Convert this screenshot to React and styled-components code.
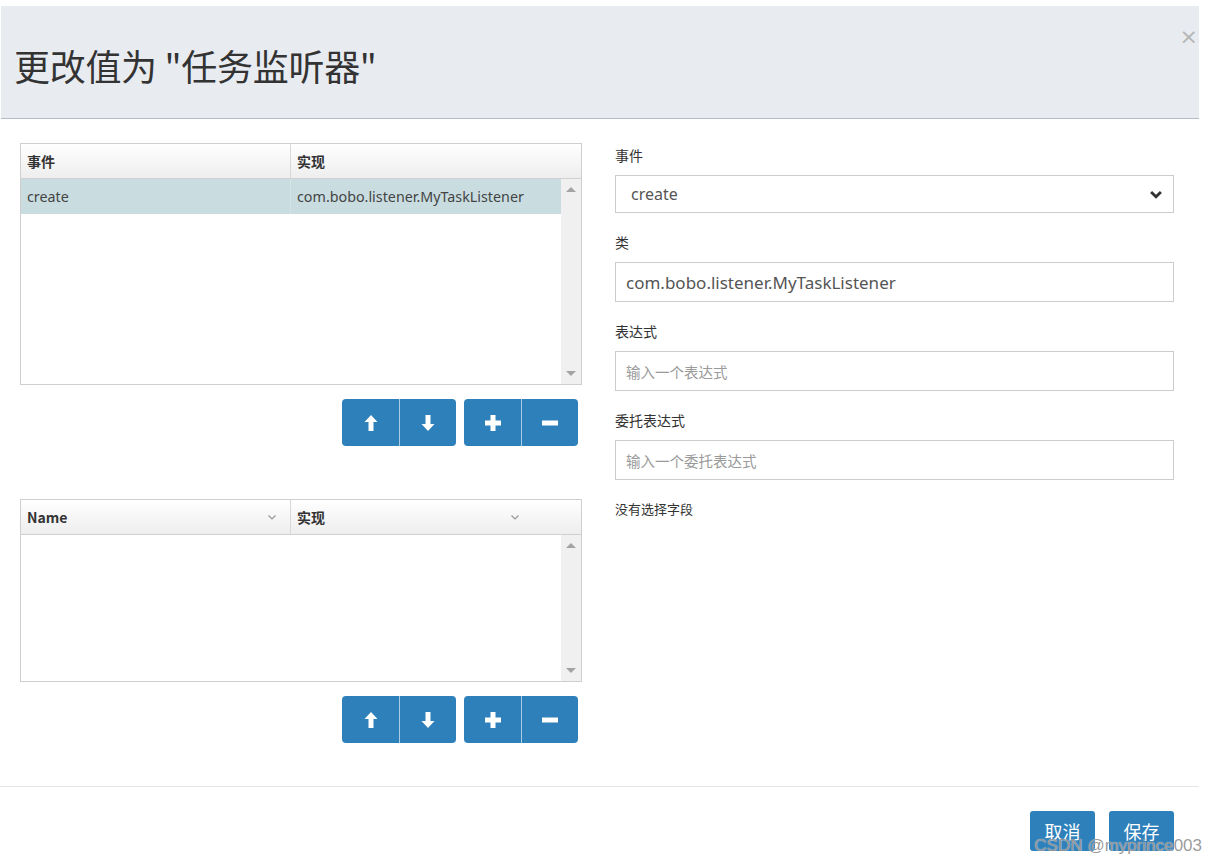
import React from "react";
import styled, { createGlobalStyle } from "styled-components";

const GlobalStyle = createGlobalStyle`
  body {
    margin: 0;
    background: #fff;
    font-family: "Noto Sans", "Noto Sans CJK SC", sans-serif;
    color: #333;
  }
`;

const Dialog = styled.div`
  position: relative;
  width: 1199px;
  height: 854px;
  margin-top: 6px;
  display: flex;
  flex-direction: column;
`;

const Header = styled.div`
  position: relative;
  height: 113px;
  background: #e8ecf1;
  border-bottom: 1px solid #b4bcc8;
  margin-left: 1px;
  display: flex;
  align-items: center;
  padding: 6px 0 0 13px;
  box-sizing: border-box;
`;

const Title = styled.h1`
  margin: 0;
  font-family: "Noto Sans CJK SC", sans-serif;
  font-weight: 400;
  font-size: 36px;
  color: #333;
  letter-spacing: -0.3px;
`;

const Close = styled.span`
  position: absolute;
  top: 18px;
  right: 1px;
  font-size: 22px;
  color: #b5b5b5;
  font-family: "DejaVu Sans", sans-serif;
`;

const Body = styled.div`
  display: flex;
  padding: 24px 0 0 20px;
  gap: 33px;
  height: 643px;
`;

const LeftCol = styled.div`
  width: 562px;
  display: flex;
  flex-direction: column;
`;

const Table = styled.div`
  border: 1px solid #cfcfcf;
  height: ${(p) => p.$height}px;
  display: flex;
  flex-direction: column;
  box-sizing: border-box;
  margin-top: ${(p) => p.$top || 0}px;
`;

const HeadRow = styled.div`
  display: grid;
  grid-template-columns: 269px 1fr;
  height: 34px;
  background: linear-gradient(#ffffff, #eeeeee);
  border-bottom: 1px solid #d0d0d0;
`;

const HeadCell = styled.div`
  display: flex;
  align-items: center;
  justify-content: space-between;
  padding: 0 ${(p) => p.$padRight || 6}px 0 6px;
  font-size: 14px;
  font-weight: 700;
  color: #333;
  font-family: "Noto Sans CJK SC", sans-serif;
  & + & {
    border-left: 1px solid #d8d8d8;
  }
`;

const TableBody = styled.div`
  flex: 1;
  display: flex;
`;

const Rows = styled.div`
  flex: 1;
`;

const Row = styled.div`
  display: grid;
  grid-template-columns: 269px 1fr;
  height: 35px;
  background: ${(p) => (p.$selected ? "#c9dde1" : "#fff")};
`;

const Cell = styled.div`
  display: flex;
  align-items: center;
  padding: 0 6px;
  font-size: 14.3px;
  color: #444;
  font-family: "Noto Sans", sans-serif;
  & + & {
    border-left: 1px solid #d6e2e5;
  }
`;

const Scrollbar = styled.div`
  width: 20px;
  background: #f0f0f0;
  display: flex;
  flex-direction: column;
  justify-content: space-between;
  align-items: center;
  padding: 8px 0;
`;

const Arrow = styled.span`
  width: 0;
  height: 0;
  border-left: 5px solid transparent;
  border-right: 5px solid transparent;
  ${(p) =>
    p.$down
      ? "border-top: 5px solid #a3a3a3;"
      : "border-bottom: 5px solid #a3a3a3;"}
`;

const ButtonRow = styled.div`
  display: flex;
  justify-content: flex-end;
  gap: 8px;
  padding-right: 4px;
  margin-top: 14px;
`;

const Group = styled.div`
  display: flex;
  border-radius: 4px;
  overflow: hidden;
`;

const IconButton = styled.button`
  width: 57px;
  height: 47px;
  border: none;
  background: #2e80ba;
  display: flex;
  align-items: center;
  justify-content: center;
  padding: 0;
  & + & {
    border-left: 1px solid #a9cbe3;
  }
`;

const RightCol = styled.div`
  width: 559px;
  display: flex;
  flex-direction: column;
  padding-top: 2px;
`;

const Label = styled.label`
  font-family: "Noto Sans CJK SC", sans-serif;
  font-size: 14px;
  line-height: 20px;
  color: #333;
  margin-bottom: 10px;
`;

const Field = styled.div`
  display: flex;
  flex-direction: column;
  margin-bottom: 19px;
`;

const Input = styled.input`
  height: 40px;
  box-sizing: border-box;
  border: 1px solid #cccccc;
  padding: 0 10px;
  font-size: 17px;
  color: #555;
  font-family: "Noto Sans", "Noto Sans CJK SC", sans-serif;
  &::placeholder {
    color: #9a9a9a;
    font-size: 14.5px;
  }
`;

const Select = styled.div`
  height: 38px;
  box-sizing: border-box;
  border: 1px solid #cccccc;
  padding: 0 10px 0 15px;
  display: flex;
  align-items: center;
  justify-content: space-between;
  font-size: 16px;
  color: #555;
`;

const Note = styled.div`
  font-family: "Noto Sans CJK SC", sans-serif;
  font-size: 13px;
  color: #333;
  line-height: 20px;
`;

const Footer = styled.div`
  border-top: 1px solid #e5e5e5;
  display: flex;
  justify-content: flex-end;
  gap: 14px;
  padding: 24px 25px 0 0;
`;

const FooterButton = styled.button`
  width: 65px;
  height: 40px;
  border: none;
  border-radius: 3px;
  background: #2e80ba;
  color: #fff;
  font-size: 18px;
  font-family: "Noto Sans CJK SC", sans-serif;
  padding: 0;
`;

const Watermark = styled.div`
  position: absolute;
  right: -3px;
  bottom: 4px;
  font-family: "Liberation Sans", sans-serif;
  font-size: 17px;
  color: rgba(110, 110, 110, 0.7);
  text-shadow: 0 0 1px #fff;
`;

const UpIcon = () => (
  <svg width="14" height="18" viewBox="0 0 14 18">
    <path d="M7 1 L13.5 8 L9.5 8 L9.5 17 L4.5 17 L4.5 8 L0.5 8 Z" fill="#fff" />
  </svg>
);

const DownIcon = () => (
  <svg width="14" height="18" viewBox="0 0 14 18">
    <path d="M7 17 L13.5 10 L9.5 10 L9.5 1 L4.5 1 L4.5 10 L0.5 10 Z" fill="#fff" />
  </svg>
);

const PlusIcon = () => (
  <svg width="16" height="16" viewBox="0 0 16 16">
    <path d="M5.5 0 H10.5 V5.5 H16 V10.5 H10.5 V16 H5.5 V10.5 H0 V5.5 H5.5 Z" fill="#fff" />
  </svg>
);

const MinusIcon = () => (
  <svg width="16" height="16" viewBox="0 0 16 16">
    <rect x="0" y="5.5" width="16" height="5" fill="#fff" />
  </svg>
);

const Chevron = ({ size = 10, color = "#999", stroke = 1.2 }) => (
  <svg width={size} height={size} viewBox="0 0 10 10">
    <path d="M1.5 3.5 L5 7 L8.5 3.5" fill="none" stroke={color} strokeWidth={stroke} />
  </svg>
);

const Buttons = () => (
  <ButtonRow>
    <Group>
      <IconButton><UpIcon /></IconButton>
      <IconButton><DownIcon /></IconButton>
    </Group>
    <Group>
      <IconButton><PlusIcon /></IconButton>
      <IconButton><MinusIcon /></IconButton>
    </Group>
  </ButtonRow>
);

const Scroll = () => (
  <Scrollbar>
    <Arrow />
    <Arrow $down />
  </Scrollbar>
);

export default function App() {
  return (
    <>
      <GlobalStyle />
      <Dialog>
        <Header>
          <Title>更改值为 "任务监听器"</Title>
          <Close>×</Close>
        </Header>
        <Body>
          <LeftCol>
            <Table $height={242}>
              <HeadRow>
                <HeadCell>事件</HeadCell>
                <HeadCell>实现</HeadCell>
              </HeadRow>
              <TableBody>
                <Rows>
                  <Row $selected>
                    <Cell>create</Cell>
                    <Cell>com.bobo.listener.MyTaskListener</Cell>
                  </Row>
                </Rows>
                <Scroll />
              </TableBody>
            </Table>
            <Buttons />
            <Table $height={183} $top={53}>
              <HeadRow>
                <HeadCell $padRight={13}>
                  Name <Chevron />
                </HeadCell>
                <HeadCell $padRight={61}>
                  实现 <Chevron />
                </HeadCell>
              </HeadRow>
              <TableBody>
                <Rows />
                <Scroll />
              </TableBody>
            </Table>
            <Buttons />
          </LeftCol>
          <RightCol>
            <Field>
              <Label>事件</Label>
              <Select>
                create
                <Chevron size={14} color="#333" stroke={2} />
              </Select>
            </Field>
            <Field>
              <Label>类</Label>
              <Input defaultValue="com.bobo.listener.MyTaskListener" />
            </Field>
            <Field>
              <Label>表达式</Label>
              <Input placeholder="输入一个表达式" />
            </Field>
            <Field>
              <Label>委托表达式</Label>
              <Input placeholder="输入一个委托表达式" />
            </Field>
            <Note>没有选择字段</Note>
          </RightCol>
        </Body>
        <Footer>
          <FooterButton>取消</FooterButton>
          <FooterButton>保存</FooterButton>
        </Footer>
        <Watermark>CSDN @myprince003</Watermark>
      </Dialog>
    </>
  );
}
